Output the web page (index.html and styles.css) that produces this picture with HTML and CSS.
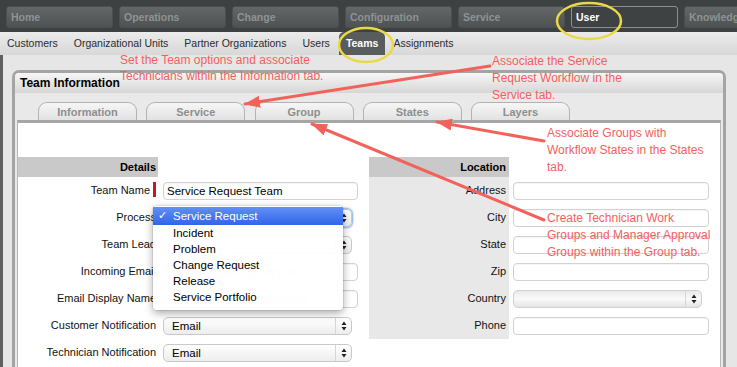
FILE: index.html
```html
<!DOCTYPE html>
<html>
<head>
<meta charset="utf-8">
<title>Team Information</title>
<link rel="stylesheet" href="styles.css">
</head>
<body>
<nav class="topnav">
  <a class="tbtn">Home</a>
  <a class="tbtn">Operations</a>
  <a class="tbtn">Change</a>
  <a class="tbtn">Configuration</a>
  <a class="tbtn">Service</a>
  <a class="tbtn active">User</a>
  <a class="tbtn">Knowledge</a>
</nav>
<nav class="subnav">
  <a>Customers</a>
  <a>Organizational Units</a>
  <a>Partner Organizations</a>
  <a>Users</a>
  <a class="cur">Teams</a>
  <a>Assignments</a>
</nav>
<main class="main">
  <section class="panel">
    <header class="panel-head">Team Information</header>
    <div class="tabs">
      <span class="tab">Information</span>
      <span class="tab">Service</span>
      <span class="tab">Group</span>
      <span class="tab">States</span>
      <span class="tab">Layers</span>
    </div>
    <div class="content">
      <div class="form">
        <div class="col details">
          <div class="col-head">Details</div><div></div>
          <div class="lab">Team Name<i class="req"></i></div>
          <div class="fld"><div class="inp">Service Request Team</div></div>
          <div class="lab">Process</div>
          <div class="fld"><div class="sel focus"><span class="val">Service Request</span><span class="arr"><svg width="6" height="10" viewBox="0 0 6 10"><path d="M0.5 4L3 0.5L5.5 4Z M0.5 6L5.5 6L3 9.5Z" fill="#222"/></svg></span></div></div>
          <div class="lab">Team Lead</div>
          <div class="fld"><div class="sel"><span class="val"></span><span class="arr"><svg width="6" height="10" viewBox="0 0 6 10"><path d="M0.5 4L3 0.5L5.5 4Z M0.5 6L5.5 6L3 9.5Z" fill="#222"/></svg></span></div></div>
          <div class="lab">Incoming Email</div>
          <div class="fld"><div class="inp faint">servicerequests@support.com</div></div>
          <div class="lab">Email Display Name</div>
          <div class="fld"><div class="inp faint">Helpdesk Service Requests</div></div>
          <div class="lab">Customer Notification</div>
          <div class="fld"><div class="sel"><span class="val">Email</span><span class="arr"><svg width="6" height="10" viewBox="0 0 6 10"><path d="M0.5 4L3 0.5L5.5 4Z M0.5 6L5.5 6L3 9.5Z" fill="#222"/></svg></span></div></div>
          <div class="lab">Technician Notification</div>
          <div class="fld"><div class="sel"><span class="val">Email</span><span class="arr"><svg width="6" height="10" viewBox="0 0 6 10"><path d="M0.5 4L3 0.5L5.5 4Z M0.5 6L5.5 6L3 9.5Z" fill="#222"/></svg></span></div></div>
        </div>
        <div class="col location">
          <div class="col-head">Location</div><div></div>
          <div class="lab">Address</div>
          <div class="fld"><div class="inp wide"></div></div>
          <div class="lab">City</div>
          <div class="fld"><div class="inp wide"></div></div>
          <div class="lab">State</div>
          <div class="fld"><div class="inp wide"></div></div>
          <div class="lab">Zip</div>
          <div class="fld"><div class="inp wide"></div></div>
          <div class="lab">Country</div>
          <div class="fld"><div class="sel aqua"><span class="val"></span><span class="arr"><svg width="6" height="10" viewBox="0 0 6 10"><path d="M0.5 4L3 0.5L5.5 4Z M0.5 6L5.5 6L3 9.5Z" fill="#222"/></svg></span></div></div>
          <div class="lab">Phone</div>
          <div class="fld"><div class="inp wide"></div></div>
        </div>
      </div>
    </div>
  </section>
</main>

<ul class="menu">
  <li class="on">Service Request</li>
  <li>Incident</li>
  <li>Problem</li>
  <li>Change Request</li>
  <li>Release</li>
  <li>Service Portfolio</li>
</ul>

<div class="note n1">Set the Team options and associate<br>Technicians within the Information tab.</div>
<div class="note n2">Associate the Service<br>Request Workflow in the<br>Service tab.</div>
<div class="note n3">Associate Groups with<br>Workflow States in the States<br>tab.</div>
<div class="note n4">Create Technician Work<br>Groups and Manager Approval<br>Groups within the Group tab.</div>

<svg class="overlay" width="737" height="367" viewBox="0 0 737 367">
  <defs>
    <marker id="ah" markerUnits="userSpaceOnUse" markerWidth="16" markerHeight="12" refX="15" refY="6" orient="auto">
      <path d="M0 0L16 6L0 12Z" fill="#f3625a"/>
    </marker>
  </defs>
  <ellipse cx="589" cy="21" rx="32" ry="18" fill="none" stroke="#e9d945" stroke-width="2.5"/>
  <ellipse cx="366" cy="45" rx="27" ry="17" fill="none" stroke="#e9d945" stroke-width="2.5"/>
  <g stroke="#f3625a" stroke-width="3" stroke-linecap="round" fill="none">
    <line x1="490" y1="66" x2="245" y2="104" marker-end="url(#ah)"/>
    <line x1="544" y1="141" x2="437" y2="122" marker-end="url(#ah)"/>
    <line x1="544" y1="220" x2="312" y2="124" marker-end="url(#ah)"/>
  </g>
</svg>
</body>
</html>
```
FILE: styles.css
```css
* { box-sizing: border-box; margin: 0; padding: 0; }
html, body { width: 737px; height: 367px; overflow: hidden; }
body {
  position: relative;
  background: #e6e6e6;
  font-family: "Liberation Sans", Arial, sans-serif;
  color: #111;
}

/* top navigation */
.topnav {
  height: 32px;
  background: #3d4142;
  display: flex;
  gap: 6px;
  padding: 6px 0 0 6px;
  overflow: hidden;
}
.tbtn {
  flex: 0 0 107px;
  height: 22px;
  border: 1px solid #4b4f50;
  border-radius: 3px;
  background: linear-gradient(#636768, #4e5253);
  color: #8e9393;
  font-weight: bold;
  font-size: 10.5px;
  line-height: 20px;
  padding-left: 4px;
}
.tbtn.active {
  background: #3e4243;
  border-color: #8b8f90;
  color: #fff;
}

/* sub navigation */
.subnav {
  height: 23px;
  background: linear-gradient(#ebebeb, #d8d8d8);
  display: flex;
  font-size: 10.5px;
  color: #2b2b2b;
}
.subnav a { padding: 0 8px; line-height: 23px; }
.subnav a:first-child { padding-left: 7px; }
.subnav .cur {
  background: #585c5d;
  color: #fff;
  font-weight: bold;
  border-radius: 5px 5px 0 0;
  padding: 0 7px;
  margin-left: 1px;
}

/* main area */
.main {
  height: 312px;
  border-left: 3px solid #5f5f5f;
  padding: 15px 0 0 9px;
}
.panel {
  width: 714px;
  height: 100%;
  border: 3px solid #a4a4a4;
  border-bottom: 0;
  border-radius: 7px 7px 0 0;
  background: #e9e9e9;
  display: flex;
  flex-direction: column;
}
.panel-head {
  height: 20px;
  background: linear-gradient(#f6f6f6, #d6d6d6);
  border-radius: 4px 4px 0 0;
  font-weight: bold;
  font-size: 12px;
  line-height: 20px;
  padding-left: 5px;
  color: #000;
}
.tabs {
  height: 27px;
  display: flex;
  gap: 9.25px;
  padding: 9px 0 0 23px;
}
.tab {
  width: 99px;
  height: 18px;
  border: 1px solid #b3b3b3;
  border-bottom: 0;
  border-radius: 9px 9px 0 0;
  background: linear-gradient(#f6f6f6, #e2e2e2);
  text-align: center;
  font-size: 11px;
  font-weight: bold;
  color: #8e8e8e;
  line-height: 18px;
}
.content {
  flex: 1;
  margin: 0 2px;
  background: #fff;
  border-top: 3px solid #a6a6a6;
  border-left: 1px solid #b8b8b8;
  border-right: 1px solid #b8b8b8;
  padding-top: 34px;
}

/* form */
.form { display: flex; }
.col {
  width: 351px;
  display: grid;
  grid-template-columns: 140px 211px;
  grid-template-rows: 20px;
  grid-auto-rows: 27px;
  align-content: start;
}
.col-head {
  background: #c9c9c9;
  font-weight: bold;
  font-size: 11px;
  line-height: 20px;
  text-align: right;
  padding-right: 2px;
  color: #000;
}
.location .col-head { padding-right: 3px; }
.lab {
  font-size: 11px;
  line-height: 27px;
  text-align: right;
  padding-right: 2px;
  white-space: nowrap;
}
.location .lab { background: #e8e8e8; padding-right: 3px; }
.req {
  display: inline-block;
  width: 3px;
  height: 15px;
  background: #c41a1a;
  margin-left: 3px;
  vertical-align: -3px;
}
.fld {
  display: flex;
  align-items: center;
  padding-left: 5px;
}
.location .fld { padding-left: 4px; }

.inp {
  width: 195px;
  height: 18px;
  border: 1px solid #d2d2d2;
  border-radius: 4px;
  background: #fff;
  box-shadow: inset 0 1px 1px rgba(0, 0, 0, 0.04);
  font-size: 11.5px;
  line-height: 16px;
  padding-left: 3px;
  white-space: nowrap;
  overflow: hidden;
  color: #000;
}
.inp.wide { width: 196px; }
.inp.faint { color: #c4c4c4; }

.sel {
  width: 189px;
  height: 18px;
  border: 1px solid #c9c9c9;
  border-radius: 5px;
  background: linear-gradient(#ffffff, #ededed);
  display: flex;
  font-size: 11.5px;
  line-height: 16px;
  color: #000;
}
.sel.focus { box-shadow: 0 0 2px 1px #7aa7f0; }
.sel.aqua {
  background: linear-gradient(#e9e9e9, #fafafa 50%, #e4e4e4);
  border-color: #d0d0d0;
}
.sel .val { flex: 1; padding-left: 8px; }
.sel .arr {
  width: 16px;
  border-left: 1px solid #d6d6d6;
  display: flex;
  align-items: center;
  justify-content: center;
}

/* open dropdown */
.menu {
  position: absolute;
  left: 153px;
  top: 206px;
  width: 190px;
  padding: 1px 0 5px;
  list-style: none;
  background: rgba(255, 255, 255, 0.95);
  border-radius: 4px;
  box-shadow: 0 3px 8px rgba(0, 0, 0, 0.35), 0 0 0 1px rgba(0, 0, 0, 0.07);
  font-size: 11.5px;
  color: #000;
}
.menu li { height: 16px; line-height: 16px; padding-left: 20px; }
.menu li.on {
  position: relative;
  height: 18px;
  line-height: 18px;
  background: linear-gradient(#6290f6, #3065e8);
  color: #fff;
}
.menu li.on::before {
  content: "\2713";
  position: absolute;
  left: 5px;
  font-family: "DejaVu Sans", sans-serif;
  font-size: 11px;
}

/* annotations */
.note {
  position: absolute;
  color: #f65e5e;
  font-size: 12px;
  line-height: 17px;
  white-space: nowrap;
}
.n1 { left: 120px; top: 52px; line-height: 16px; }
.n2 { left: 492px; top: 53px; }
.n3 { left: 547px; top: 125px; }
.n4 { left: 547px; top: 210px; }
.overlay { position: absolute; left: 0; top: 0; pointer-events: none; }
```
